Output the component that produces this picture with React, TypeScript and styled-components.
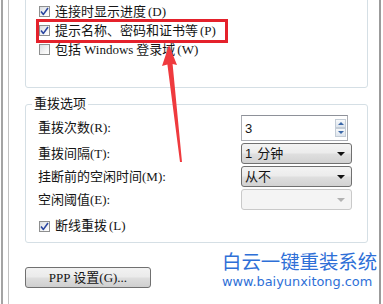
import styled, { createGlobalStyle } from "styled-components";

const GlobalStyle = createGlobalStyle`
  html, body {
    margin: 0;
    padding: 0;
    background: #fff;
  }
  body {
    font-family: "Liberation Serif", "Noto Sans CJK SC", serif;
    font-size: 13px;
    color: #151515;
  }
`;

const Screen = styled.div`
  position: relative;
  width: 383px;
  height: 304px;
  overflow: hidden;
  background: #fff;
`;

const Frame = styled.div`
  height: 100%;
  margin-left: 1px;
  padding-left: 5px;
  border-left: 2px solid #a4a4a4;
  box-sizing: border-box;
`;

const Page = styled.div`
  width: 373px;
  height: 100%;
  box-sizing: border-box;
  border-left: 1px solid #c2c2c2;
  border-right: 2px solid #9b9b9b;
  padding: 0 11px 0 16px;
  display: flex;
  flex-direction: column;
`;

const TopGroup = styled.div`
  margin-top: -12px;
  height: 100px;
  box-sizing: border-box;
  border: 1px solid #d5dfe5;
  border-radius: 3px;
  padding: 13px 0 0 13px;
  display: flex;
  flex-direction: column;
`;

const CheckRow = styled.label<{ $highlight?: boolean }>`
  position: relative;
  display: flex;
  align-items: center;
  gap: 5px;
  height: 19px;
  line-height: 16px;
  white-space: nowrap;

  ${({ $highlight }) =>
    $highlight &&
    `
    &::after {
      content: "";
      position: absolute;
      left: -3px;
      top: -2px;
      width: 192px;
      height: 24px;
      box-sizing: border-box;
      border: 3px solid #e4212b;
    }
  `}
`;

const Box = styled.span`
  flex: none;
  width: 11px;
  height: 11px;
  box-sizing: border-box;
  border: 1px solid #8e8f8f;
  background: linear-gradient(135deg, #d9dde2 0%, #f4f4f4 60%, #ffffff 100%);
  display: flex;
  align-items: center;
  justify-content: center;
`;

const Latin = styled.span`
  margin: 0 3px;
`;

const Mnemonic = styled.span`
  margin-left: 2px;
`;

const Fieldset = styled.fieldset`
  margin: 8px 0 0;
  padding: 3px 15px 8px 12px;
  border: 1px solid #d5dfe5;
  border-radius: 3px;
  min-width: 0;
`;

const Legend = styled.legend`
  margin-left: -6px;
  padding: 0 2px;
  line-height: 16px;
`;

const OptionGrid = styled.div`
  display: grid;
  grid-template-columns: 1fr 111px;
  grid-template-rows: 26px 21px 21px 21px;
  row-gap: 2px;
  align-items: center;
`;

const Label = styled.span`
  line-height: 16px;
  white-space: nowrap;
`;

const Spinner = styled.div`
  width: 107px;
  height: 26px;
  box-sizing: border-box;
  border: 1px solid #abadb3;
  border-top-color: #8e9199;
  background: #fff;
  display: flex;
  align-items: center;
  padding: 0 1px 0 3px;
`;

const NumberText = styled.span`
  flex: 1;
  font-family: "Liberation Sans", "Noto Sans CJK SC", sans-serif;
  font-size: 13px;
`;

const SpinButtons = styled.div`
  display: flex;
  flex-direction: column;
`;

const SpinButton = styled.span<{ $down?: boolean }>`
  width: 11px;
  height: 9px;
  box-sizing: border-box;
  border: 1px solid #c3ccd6;
  background: linear-gradient(#f7f9fb, #dde4ec);
  display: flex;
  align-items: center;
  justify-content: center;

  &::before {
    content: "";
    border-left: 3px solid transparent;
    border-right: 3px solid transparent;
    ${({ $down }) =>
      $down ? "border-top: 3px solid #3b68a8;" : "border-bottom: 3px solid #3b68a8;"}
  }
`;

const Select = styled.div<{ $disabled?: boolean }>`
  height: 21px;
  box-sizing: border-box;
  border: 1px solid ${({ $disabled }) => ($disabled ? "#c9c9c9" : "#707070")};
  border-radius: 3px;
  background: ${({ $disabled }) =>
    $disabled
      ? "#f4f4f4"
      : "linear-gradient(#f3f3f3 0%, #ececec 45%, #dedede 55%, #d2d2d2 100%)"};
  display: flex;
  align-items: center;
  justify-content: space-between;
  padding: 0 6px 0 3px;
  line-height: 16px;
  white-space: nowrap;

  &::after {
    content: "";
    border-left: 4px solid transparent;
    border-right: 4px solid transparent;
    border-top: 4px solid ${({ $disabled }) => ($disabled ? "#b2b2b2" : "#111")};
  }
`;

const SansDigit = styled.span`
  font-family: "Liberation Sans", sans-serif;
  margin-right: 5px;
`;

const RedialRow = styled(CheckRow)`
  margin-top: 8px;
  height: 16px;
  padding-left: 1px;
`;

const Footer = styled.div`
  margin-top: 24px;
  display: flex;
`;

const Button = styled.button`
  width: 126px;
  height: 21px;
  padding: 0;
  border: 1px solid #707070;
  border-radius: 3px;
  background: linear-gradient(#f2f2f2 0%, #ebebeb 45%, #dddddd 55%, #cfcfcf 100%);
  font: inherit;
  color: #151515;
  line-height: 16px;
`;

const Watermark = styled.div`
  position: absolute;
  left: 222px;
  top: 250px;
  color: #2e6fd7;
  display: flex;
  flex-direction: column;
`;

const WatermarkTitle = styled.span`
  font-family: "Noto Sans CJK SC", sans-serif;
  font-size: 19.4px;
  line-height: 22px;
`;

const WatermarkUrl = styled.span`
  font-family: "DejaVu Sans", sans-serif;
  font-size: 12.9px;
  line-height: 15px;
  margin-top: 2px;
`;

const ArrowLayer = styled.svg`
  position: absolute;
  left: 0;
  top: 0;
  width: 383px;
  height: 304px;
  pointer-events: none;
`;

const Check = () => (
  <svg width="9" height="9" viewBox="0 0 9 9">
    <path
      d="M1 4.6 L3.4 7.4 L8 1"
      fill="none"
      stroke="#2a46a0"
      strokeWidth="1.6"
      strokeLinejoin="round"
    />
  </svg>
);

const CheckBox = ({ checked }: { checked?: boolean }) => (
  <Box>{checked && <Check />}</Box>
);

export default function App() {
  return (
    <>
      <GlobalStyle />
      <Screen>
        <Frame>
          <Page>
            <TopGroup>
              <CheckRow>
                <CheckBox checked />
                <span>
                  连接时显示进度<Mnemonic>(D)</Mnemonic>
                </span>
              </CheckRow>
              <CheckRow $highlight>
                <CheckBox checked />
                <span>
                  提示名称、密码和证书等<Mnemonic>(P)</Mnemonic>
                </span>
              </CheckRow>
              <CheckRow>
                <CheckBox />
                <span>
                  包括<Latin>Windows</Latin>登录域<Mnemonic>(W)</Mnemonic>
                </span>
              </CheckRow>
            </TopGroup>

            <Fieldset>
              <Legend>重拨选项</Legend>
              <OptionGrid>
                <Label>重拨次数(R):</Label>
                <Spinner>
                  <NumberText>3</NumberText>
                  <SpinButtons>
                    <SpinButton />
                    <SpinButton $down />
                  </SpinButtons>
                </Spinner>
                <Label>重拨间隔(T):</Label>
                <Select>
                  <span>
                    <SansDigit>1</SansDigit>分钟
                  </span>
                </Select>
                <Label>挂断前的空闲时间(M):</Label>
                <Select>
                  <span>从不</span>
                </Select>
                <Label>空闲阈值(E):</Label>
                <Select $disabled>
                  <span />
                </Select>
              </OptionGrid>
              <RedialRow>
                <CheckBox checked />
                <span>
                  断线重拨<Mnemonic>(L)</Mnemonic>
                </span>
              </RedialRow>
            </Fieldset>

            <Footer>
              <Button>PPP 设置(G)...</Button>
            </Footer>
          </Page>
        </Frame>

        <Watermark>
          <WatermarkTitle>白云一键重装系统</WatermarkTitle>
          <WatermarkUrl>www.baiyunxitong.com</WatermarkUrl>
        </Watermark>

        <ArrowLayer viewBox="0 0 383 304">
          <polygon
            points="169,45 177,65 172.6,64 182,162 180,162 167.4,64.5 162,66"
            fill="#ef3a3e"
          />
        </ArrowLayer>
      </Screen>
    </>
  );
}
